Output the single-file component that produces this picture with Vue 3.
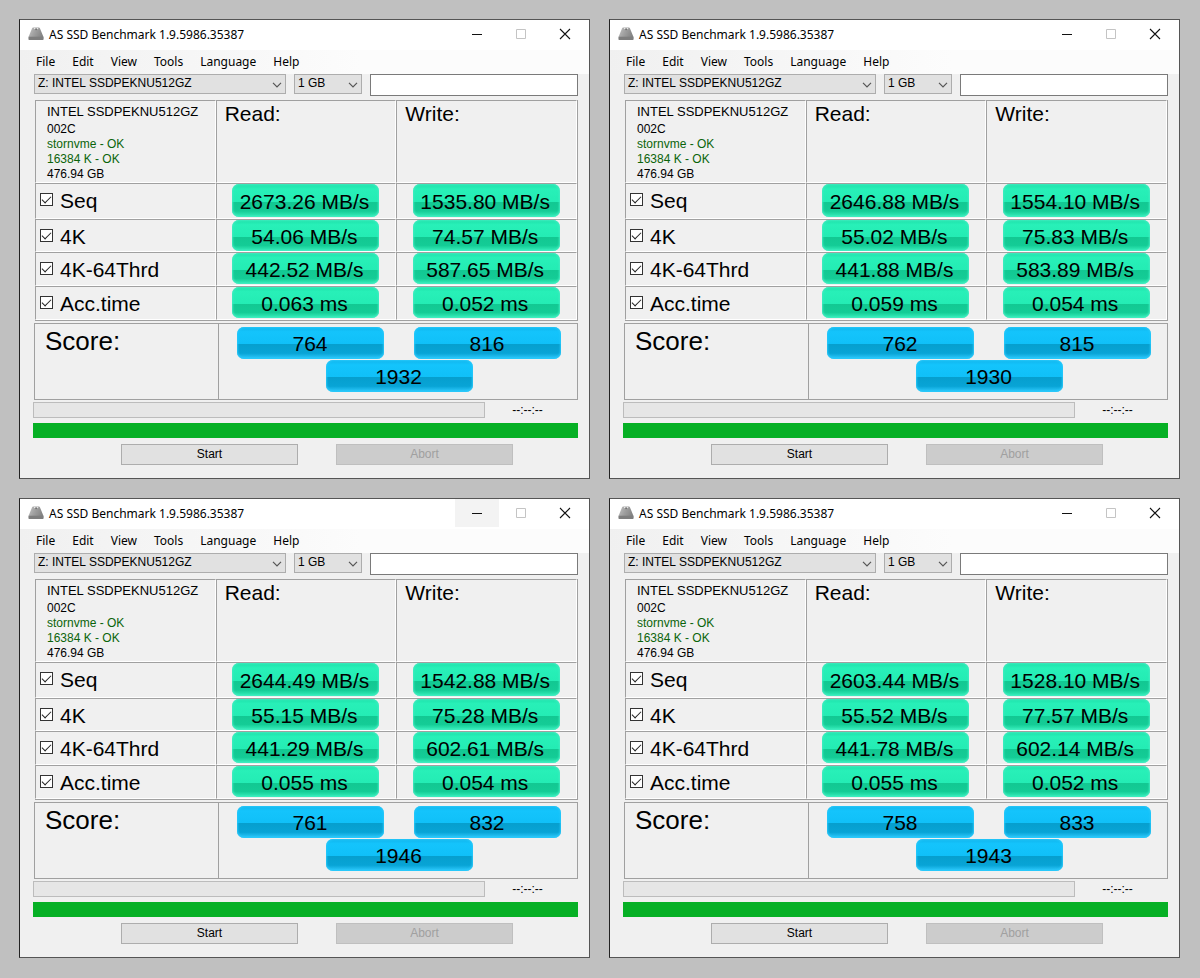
<script setup>
const windows = [
  { read: ['2673.26 MB/s', '54.06 MB/s', '442.52 MB/s', '0.063 ms'], write: ['1535.80 MB/s', '74.57 MB/s', '587.65 MB/s', '0.052 ms'], score: ['764', '816', '1932'] },
  { read: ['2646.88 MB/s', '55.02 MB/s', '441.88 MB/s', '0.059 ms'], write: ['1554.10 MB/s', '75.83 MB/s', '583.89 MB/s', '0.054 ms'], score: ['762', '815', '1930'] },
  { read: ['2644.49 MB/s', '55.15 MB/s', '441.29 MB/s', '0.055 ms'], write: ['1542.88 MB/s', '75.28 MB/s', '602.61 MB/s', '0.054 ms'], score: ['761', '832', '1946'], hot: true },
  { read: ['2603.44 MB/s', '55.52 MB/s', '441.78 MB/s', '0.055 ms'], write: ['1528.10 MB/s', '77.57 MB/s', '602.14 MB/s', '0.052 ms'], score: ['758', '833', '1943'] },
]
const tests = ['Seq', '4K', '4K-64Thrd', 'Acc.time']
const menus = ['File', 'Edit', 'View', 'Tools', 'Language', 'Help']
</script>

<template>
  <main class="desktop">
    <section v-for="(w, i) in windows" :key="i" class="window">
      <header class="titlebar">
        <svg class="app-icon" viewBox="0 0 16 14" aria-hidden="true">
          <defs>
            <linearGradient :id="`drive-${i}`" x1="0" y1="0" x2="1" y2="0.4">
              <stop offset="0" stop-color="#c4c4c4" />
              <stop offset="0.5" stop-color="#a0a0a0" />
              <stop offset="1" stop-color="#858585" />
            </linearGradient>
          </defs>
          <path d="M4 1.4 Q4.3 0.5 5.2 0.5 H10.8 Q11.7 0.5 12 1.4 L15.4 9.8 V12.2 H0.6 V9.8 Z" :fill="`url(#drive-${i})`" />
          <path d="M0.6 9.8 H15.4 V12.4 Q15.4 13 14.8 13 H1.2 Q0.6 13 0.6 12.4 Z" fill="#7e7e7e" />
          <path d="M6 1.6 H7.2 M9 1.6 H10.2" stroke="#f0f0f0" />
          <path d="M7.4 2.6 H8.8" stroke="#666" />
        </svg>
        <h1>AS SSD Benchmark 1.9.5986.35387</h1>
        <div class="caption">
          <button type="button" aria-label="Minimize" :class="{ hot: w.hot }">
            <svg viewBox="0 0 12 12"><path d="M1 6.5 H11" stroke="#111" /></svg>
          </button>
          <button type="button" aria-label="Maximize" disabled>
            <svg viewBox="0 0 12 12"><path d="M1.5 1.5 H10.5 V10.5 H1.5 Z" stroke="#c4c4c4" fill="none" /></svg>
          </button>
          <button type="button" aria-label="Close">
            <svg viewBox="0 0 12 12"><path d="M1 1 L11 11 M11 1 L1 11" stroke="#111" stroke-width="1.1" /></svg>
          </button>
        </div>
      </header>

      <nav class="menubar">
        <button v-for="m in menus" :key="m" type="button">{{ m }}</button>
      </nav>

      <div class="content">
        <div class="toolbar">
          <div class="combo drive">
            <select aria-label="Drive"><option>Z: INTEL SSDPEKNU512GZ</option></select>
            <svg viewBox="0 0 10 6" aria-hidden="true"><path d="M1 0.8 L5 4.8 L9 0.8" /></svg>
          </div>
          <div class="combo size">
            <select aria-label="Test size"><option>1 GB</option></select>
            <svg viewBox="0 0 10 6" aria-hidden="true"><path d="M1 0.8 L5 4.8 L9 0.8" /></svg>
          </div>
          <input class="field" type="text" aria-label="Notes">
        </div>

        <table class="results">
          <thead>
            <tr>
              <td class="info">
                <p class="model">INTEL SSDPEKNU512GZ</p>
                <p>002C</p>
                <p class="ok">stornvme - OK</p>
                <p class="ok">16384 K - OK</p>
                <p>476.94 GB</p>
              </td>
              <th scope="col">Read:</th>
              <th scope="col">Write:</th>
            </tr>
          </thead>
          <tbody>
            <tr v-for="(t, r) in tests" :key="t">
              <th scope="row">
                <label>
                  <input type="checkbox" checked>
                  {{ t }}
                </label>
              </th>
              <td><span class="pill green">{{ w.read[r] }}</span></td>
              <td><span class="pill green">{{ w.write[r] }}</span></td>
            </tr>
          </tbody>
        </table>

        <div class="score">
          <h2>Score:</h2>
          <div class="score-values">
            <span class="pill blue">{{ w.score[0] }}</span>
            <span class="pill blue">{{ w.score[1] }}</span>
            <span class="pill blue">{{ w.score[2] }}</span>
          </div>
        </div>

        <div class="progress">
          <div class="track"></div>
          <span class="time">--:--:--</span>
        </div>
        <div class="total"></div>
        <div class="actions">
          <button type="button">Start</button>
          <button type="button" disabled>Abort</button>
        </div>
      </div>
    </section>
  </main>
</template>

<style>
body {
  margin: 0;
  background: #c0c0c0;
}
</style>

<style scoped>
* {
  box-sizing: border-box;
}

.desktop {
  display: grid;
  grid-template-columns: 1fr 1fr;
  gap: 19px;
  padding: 19px 20px 19px 19px;
  font-family: "Liberation Sans", Arial, sans-serif;
  font-size: 12px;
  color: #000;
}

.window {
  min-width: 0;
  padding-bottom: 13px;
  border: 1px solid #555;
  border-left-color: #222;
  background: #f0f0f0;
}

button {
  font: inherit;
  color: inherit;
}

.titlebar {
  display: flex;
  align-items: center;
  height: 30px;
  padding: 0 2px 2px 8px;
  background: #fff;
  font-family: "Noto Sans", sans-serif;
}

.app-icon {
  width: 16px;
  height: 14px;
}

h1 {
  margin: 0 auto 0 5px;
  font-size: 12px;
  font-weight: 400;
  white-space: nowrap;
}

.caption {
  display: flex;
  height: 28px;
}

.caption button {
  display: flex;
  align-items: center;
  justify-content: center;
  width: 44px;
  padding: 0;
  border: 0;
  background: none;
}

.caption .hot {
  background: #f3f3f3;
}

.caption svg {
  width: 12px;
  height: 12px;
}

.menubar {
  display: flex;
  gap: 17px;
  height: 24px;
  padding: 0 16px 2px;
  background: linear-gradient(90deg, #f0f0f0, #fcfcfc 60%);
  font-family: "Noto Sans", sans-serif;
}

.menubar button {
  padding: 0;
  border: 0;
  background: none;
}

.content {
  padding: 0 11px 0 13px;
}

.toolbar {
  display: flex;
  align-items: flex-start;
  gap: 8px;
  padding-left: 1px;
}

.combo {
  position: relative;
  flex: none;
  height: 20px;
}

.drive {
  width: 252px;
}

.size {
  width: 68px;
}

.combo select {
  appearance: none;
  width: 100%;
  height: 100%;
  padding: 0 18px 2px 3px;
  border: 1px solid #adadad;
  border-radius: 0;
  background: #e1e1e1;
  color: #000;
  font: inherit;
}

.combo svg {
  position: absolute;
  top: 8px;
  right: 4px;
  width: 10px;
  height: 6px;
  fill: none;
  stroke: #555;
  stroke-width: 1.2;
  pointer-events: none;
}

.field {
  flex: 1;
  min-width: 0;
  height: 22px;
  border: 1px solid #7a7a7a;
  background: #fff;
}

.results {
  width: calc(100% - 2px);
  margin: 4px 0 0 2px;
  table-layout: fixed;
  border-spacing: 0;
  border-right: 1px solid #a0a0a0;
  border-bottom: 1px solid #a0a0a0;
}

.results th,
.results td {
  height: 34px;
  padding: 0;
  border: 1px solid #fff;
  border-top-color: #a0a0a0;
  border-left-color: #a0a0a0;
  font-size: 21px;
  font-weight: 400;
  line-height: 24px;
  text-align: center;
  vertical-align: top;
}

.results thead th {
  height: 83px;
  padding: 1px 8px;
  text-align: left;
}

.results .info {
  padding: 3px 11px 0;
  font-size: 12px;
  text-align: left;
}

.info p {
  margin: 0;
  line-height: 15px;
}

.info .model {
  margin-bottom: 2px;
  font-size: 13px;
  line-height: 16px;
  white-space: nowrap;
}

.info .ok {
  color: #0a640a;
}

.results tbody tr:first-child > * {
  height: 36px;
}

.results tbody tr:nth-child(2) > * {
  height: 33px;
}

.results tbody th {
  padding: 5px 4px 0;
  text-align: left;
}

label {
  display: flex;
  gap: 7px;
}

input[type="checkbox"] {
  appearance: none;
  display: flex;
  justify-content: center;
  flex: none;
  width: 13px;
  height: 13px;
  margin: 4px 0 0;
  border: 1px solid #333;
  background: #fff;
}

input[type="checkbox"]:checked::before {
  content: "";
  width: 4px;
  height: 8px;
  border: solid #222;
  border-width: 0 1px 1px 0;
  transform: rotate(45deg);
}

.pill {
  display: flex;
  align-items: center;
  justify-content: center;
  width: 147px;
  height: 31px;
  margin: 0 auto;
  padding: 2px 3px 0 0;
  border-radius: 7px;
  font-size: 21px;
  line-height: 24px;
}

.results tbody tr:first-child .pill {
  height: 33px;
}

.green {
  background: linear-gradient(#1ce0a8, #28f0b8 15%, #24ecb4 54%, #12c892 54%, #14cc96 82%, #38f0bc);
  box-shadow: inset 0 0 2px 1px #40ecc0;
}

.blue {
  background: linear-gradient(#10b4ec, #14c4fc 15%, #10c0f8 54%, #069fce 54%, #08a4d6 82%, #30ccff);
  box-shadow: inset 0 0 2px 1px #28c8fa;
}

.score {
  display: flex;
  min-height: 77px;
  margin: 2px 0 0 1px;
  border: 1px solid #a0a0a0;
}

h2 {
  flex: none;
  width: 183px;
  margin: 0;
  padding: 2px 10px;
  font-size: 26px;
  font-weight: 400;
  line-height: 30px;
}

.score-values {
  display: flex;
  flex: 1;
  flex-wrap: wrap;
  align-content: flex-start;
  justify-content: center;
  gap: 1px 30px;
  padding: 3px 0 0 2px;
  border-left: 1px solid #a0a0a0;
}

.score-values .pill {
  height: 32px;
  margin: 0;
  padding-right: 1px;
}

.progress {
  display: flex;
  align-items: center;
  margin-top: 2px;
}

.track {
  flex: 1;
  height: 16px;
  border: 1px solid #bcbcbc;
  background: #e6e6e6;
}

.time {
  width: 93px;
  padding-right: 8px;
  text-align: center;
}

.total {
  height: 15px;
  margin-top: 5px;
  background: #06b025;
}

.actions {
  display: flex;
  justify-content: center;
  gap: 38px;
  margin-top: 6px;
  padding-left: 23px;
}

.actions button {
  width: 177px;
  height: 21px;
  padding: 0 0 2px;
  border: 1px solid #adadad;
  background: #e1e1e1;
}

.actions button:disabled {
  border-color: #bfbfbf;
  background: #ccc;
  color: #a0a0a0;
}
</style>
